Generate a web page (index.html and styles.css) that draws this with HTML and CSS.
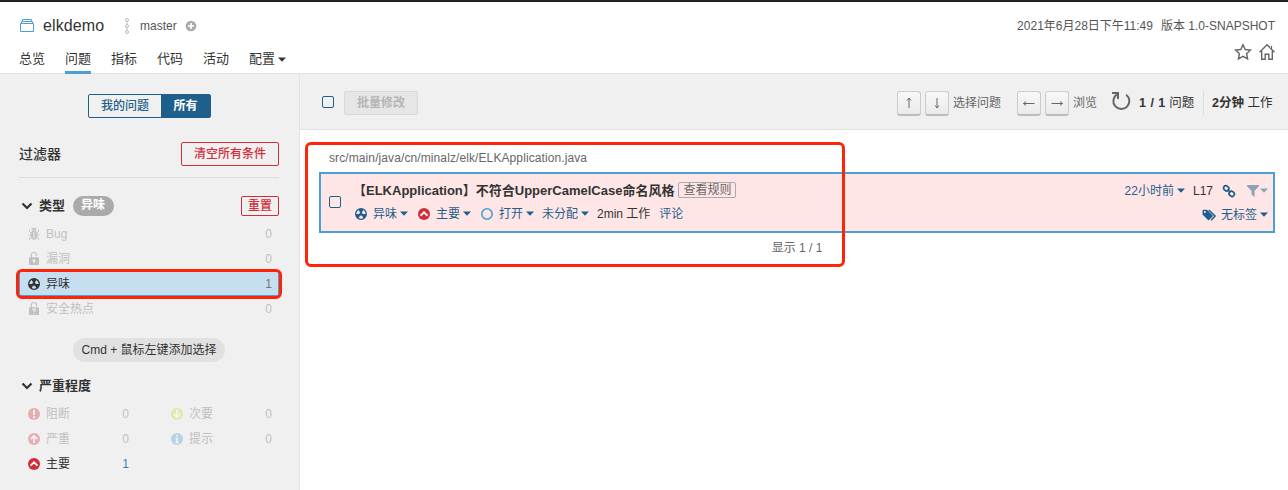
FILE: index.html
```html
<!DOCTYPE html>
<html lang="zh-CN">
<head>
<meta charset="utf-8">
<title>elkdemo</title>
<link rel="stylesheet" href="styles.css">
</head>
<body>
<svg class="defs" aria-hidden="true">
  <symbol id="smell" viewBox="0 0 16 16"><path fill="currentColor" fill-rule="evenodd" d="M8 2a6 6 0 1 0 0 12A6 6 0 0 0 8 2zM7.2 9.4L5.7 12.1a4.8 4.8 0 0 0 4.6 0L8.8 9.4a1.6 1.6 0 0 1-1.6 0zM6.4 8H3.3a4.7 4.7 0 0 1 2.3-4L7.2 6.6A1.6 1.6 0 0 0 6.4 8zM9.6 8h3.1a4.7 4.7 0 0 0-2.3-4L8.8 6.6A1.6 1.6 0 0 1 9.6 8z"/></symbol>
  <symbol id="major" viewBox="0 0 16 16"><circle cx="8" cy="8" r="6" fill="#d02f3a"/><path d="M4.6 9.6L8 6.4l3.4 3.2" fill="none" stroke="#fff" stroke-width="1.9"/></symbol>
  <symbol id="caret" viewBox="0 0 8 5"><path fill="currentColor" d="M0 .5h8L4 4.800z"/></symbol>
  <symbol id="chev" viewBox="0 0 12 8"><path d="M1.5 1.5L6 6l4.5-4.5" fill="none" stroke="#333" stroke-width="2.200"/></symbol>
  <symbol id="lock" viewBox="0 0 16 16"><path d="M5.300 7V4.200a2.600 2.600 0 0 1 5.200-.2v1" fill="none" stroke="currentColor" stroke-width="1.2"/><rect x="3" y="6.300" width="10" height="7.700" rx="1" fill="currentColor"/></symbol>
</svg>
<header class="header">
  <div class="header-top">
    <svg class="project-icon" width="16" height="16" viewBox="0 0 16 16" fill="none" stroke="#4b9fd5"><path d="M1.5 5.5h13v8h-13zM2.5 5V3.5h11V5M3.5 3V1.5h9V3"/></svg>
    <span class="project">elkdemo</span>
    <svg class="branch-icon" width="8" height="16" viewBox="0 0 8 16" fill="none" stroke="#bbb"><circle cx="4" cy="2" r="1.5"/><circle cx="4" cy="8" r="1.5"/><circle cx="4" cy="14" r="1.5"/><path d="M4 3.5v3M4 9.5v3"/></svg>
    <span class="branch">master</span>
    <svg width="12" height="12" viewBox="0 0 12 12"><circle cx="6" cy="6" r="5.3" fill="#aaa"/><path d="M6 3v6M3 6h6" stroke="#fff" stroke-width="1.7"/></svg>
    <span class="meta">2021年6月28日下午11:49</span><span class="version">版本 1.0-SNAPSHOT</span>
  </div>
  <div class="header-nav">
    <nav class="nav">
      <a class="nav-item">总览</a><a class="nav-item active">问题</a><a class="nav-item">指标</a><a class="nav-item">代码</a><a class="nav-item">活动</a><a class="nav-item">配置<svg class="caret"><use href="#caret"/></svg></a>
    </nav>
    <div class="header-actions">
      <svg width="18" height="18" viewBox="0 0 18 18" fill="none" stroke="#666" stroke-width="1.4"><path d="M9 1.7l2.2 4.8 5.2.6-3.8 3.6 1 5.2L9 13.3l-4.6 2.6 1-5.2L1.600 7.1l5.200-.6z"/></svg>
      <svg width="18" height="18" viewBox="0 0 18 18" fill="none" stroke="#666" stroke-width="1.4"><path d="M1.500 9.200L9 1.800l7.500 7.400M3.700 8v8.300h3.500v-5h3.600v5h3.500V8M13.400 5.500V3"/></svg>
    </div>
  </div>
</header>
<div class="layout">
  <aside class="sidebar">
    <div class="toggle"><span class="toggle-item">我的问题</span><span class="toggle-item on">所有</span></div>
    <div class="filters-head"><span class="filters-title">过滤器</span><button class="danger clear">清空所有条件</button></div>
    <section class="facet">
      <div class="facet-head"><svg class="chev"><use href="#chev"/></svg><b>类型</b><span class="badge">异味</span><button class="danger reset">重置</button></div>
      <div class="row muted">
        <svg class="ico" viewBox="0 0 16 16"><ellipse cx="8" cy="9" rx="3.300" ry="4.700" fill="#c4c4c4"/><path d="M5.800 4.200a2.200 2.200 0 0 1 4.400 0z" fill="#c4c4c4"/><path d="M8 6v6.500" stroke="#f0f0f0"/><path d="M5 7L3.500 5.500V3.500M11 7l1.500-1.500v-2M5 9H2.500M11 9h2.500M5 11l-1.500 1.300V14M11 11l1.500 1.300V14M6.500 3L5.700 1.600M9.500 3l.8-1.400" fill="none" stroke="#c4c4c4"/></svg>
        <span>Bug</span><i>0</i></div>
      <div class="row muted"><span class="ico locked"><svg class="ico"><use href="#lock"/></svg><svg class="ico over" viewBox="0 0 16 16"><circle cx="8" cy="9.700" r="1.400" fill="#f0f0f0"/><path d="M8 10v2.200" stroke="#f0f0f0"/></svg></span><span>漏洞</span><i>0</i></div>
      <div class="row selected"><svg class="ico"><use href="#smell"/></svg><span>异味</span><i>1</i><div class="mark mark-row"></div></div>
      <div class="row muted"><span class="ico locked"><svg class="ico"><use href="#lock"/></svg><svg class="ico over" viewBox="0 0 16 16"><path d="M6.500 9.200c0-1.900 3-1.700 3-.2 0 1-1.500 1-1.500 2.100M8 12v1.200" fill="none" stroke="#f0f0f0" stroke-width="1.200"/></svg></span><span>安全热点</span><i>0</i></div>
      <div class="hint">Cmd + 鼠标左键添加选择</div>
    </section>
    <section class="facet severity">
      <div class="facet-head"><svg class="chev"><use href="#chev"/></svg><b>严重程度</b></div>
      <div class="cols">
        <div class="row muted"><svg class="ico faded" viewBox="0 0 16 16"><circle cx="8" cy="8" r="6" fill="#d4333f"/><path d="M8 4v5M8 10.300v1.900" stroke="#fff" stroke-width="1.900"/></svg><span>阻断</span><i>0</i></div>
        <div class="row muted"><svg class="ico faded" viewBox="0 0 16 16"><circle cx="8" cy="8" r="6" fill="#c4e02c"/><path d="M8 4v7M4.800 8L8 11.200 11.200 8" fill="none" stroke="#fff" stroke-width="1.700"/></svg><span>次要</span><i>0</i></div>
        <div class="row muted"><svg class="ico faded" viewBox="0 0 16 16"><circle cx="8" cy="8" r="6" fill="#d4333f"/><path d="M8 12V5M4.800 8L8 4.800 11.200 8" fill="none" stroke="#fff" stroke-width="1.700"/></svg><span>严重</span><i>0</i></div>
        <div class="row muted"><svg class="ico faded" viewBox="0 0 16 16"><circle cx="8" cy="8" r="6" fill="#4b9fd5"/><path d="M8 4v1.800M6.500 7.500H8v4M6.300 11.500h3.500" fill="none" stroke="#fff" stroke-width="1.600"/></svg><span>提示</span><i>0</i></div>
        <div class="row"><svg class="ico"><use href="#major"/></svg><span>主要</span><i class="link">1</i></div>
      </div>
    </section>
  </aside>
  <main class="main">
    <div class="toolbar">
      <span class="check"></span><button class="bulk" disabled>批量修改</button>
      <div class="tools">
        <kbd class="key"><svg width="16" height="16" viewBox="0 0 16 16"><path d="M8 13V3M6 5.500L8 3l2 2.500"/></svg></kbd><kbd class="key"><svg width="16" height="16" viewBox="0 0 16 16"><path d="M8 3v10M6 10.500L8 13l2-2.500"/></svg></kbd><span class="tool-label pick">选择问题</span>
        <kbd class="key"><svg width="16" height="16" viewBox="0 0 16 16"><path d="M13.500 8.500h-11M5 6.500l-2.500 2 2.500 2"/></svg></kbd><kbd class="key"><svg width="16" height="16" viewBox="0 0 16 16"><path d="M2.500 8.500h11M11 6.500l2.500 2-2.500 2"/></svg></kbd><span class="tool-label browse">浏览</span>
        <svg class="reload" width="20" height="20" viewBox="0 0 20 20" fill="none" stroke="#666" stroke-width="2"><path d="M15.200 3.700A8 8 0 1 1 5.900 3.400M1 2h6v6" /></svg>
        <span class="count"><b>1 / 1</b> 问题</span><span class="effort"><b>2分钟</b> 工作</span>
      </div>
    </div>
    <div class="list">
      <div class="path">src/main/java/cn/minalz/elk/ELKApplication.java</div>
      <article class="issue">
        <span class="check"></span>
        <div class="issue-body">
          <div class="issue-title"><b>【ELKApplication】不符合UpperCamelCase命名风格</b><span class="rule">查看规则</span></div>
          <div class="issue-meta">
            <span class="act w-smell"><svg class="ico"><use href="#smell"/></svg>异味<svg class="caret"><use href="#caret"/></svg></span>
            <span class="act w-major"><svg class="ico"><use href="#major"/></svg>主要<svg class="caret"><use href="#caret"/></svg></span>
            <span class="act w-open"><svg class="ico" viewBox="0 0 16 16"><circle cx="8" cy="8" r="5.200" fill="none" stroke="#4b9fd5" stroke-width="1.600"/></svg>打开<svg class="caret"><use href="#caret"/></svg></span>
            <span class="act w-assign">未分配<svg class="caret"><use href="#caret"/></svg></span>
            <span class="work">2min 工作</span><span class="act">评论</span>
          </div>
        </div>
        <div class="issue-side">
          <div class="side-row"><span class="act">22小时前<svg class="caret"><use href="#caret"/></svg></span><span class="line">L17</span>
            <svg class="chain" width="14" height="14" viewBox="0 0 14 14" fill="none" stroke="#1f5f8b" stroke-width="1.700"><rect x="1.500" y="2" width="5.400" height="4.600" rx="2.200" transform="rotate(40 4.200 4.300)"/><rect x="7" y="7.500" width="5.400" height="4.600" rx="2.200" transform="rotate(40 9.700 9.800)"/><path d="M5.500 5.500l3 3"/></svg>
            <span class="act filter"><svg width="12" height="12" viewBox="0 0 12 12"><path fill="currentColor" d="M0 0h12v1.200L7.600 5.700V12L4.500 9.600V5.700L0 1.200z"/></svg><svg class="caret"><use href="#caret"/></svg></span></div>
          <div class="side-row tags"><svg width="15" height="12" viewBox="0 0 15 12"><path fill="#1f5f8b" fill-rule="evenodd" d="M.5 1.500v4L6.500 11.500 11 7 5 .7H1.300zM2.800 2a1 1 0 1 1 0 2 1 1 0 0 1 0-2z"/><path d="M6.800 1l6.300 6.100-4 4.200" fill="none" stroke="#1f5f8b" stroke-width="1.500"/></svg><span class="act">无标签<svg class="caret"><use href="#caret"/></svg></span></div>
        </div>
      </article>
      <div class="shown">显示 1 / 1</div>
      <div class="mark mark-issue"></div>
    </div>
  </main>
</div>
</body>
</html>
```
FILE: styles.css
```css
* { box-sizing: border-box; }
body {
  margin: 0;
  width: 1288px;
  height: 490px;
  overflow: hidden;
  background: #fff;
  color: #333;
  font: 12px/16px "Liberation Sans", "Noto Sans CJK SC", sans-serif;
}
svg { display: block; flex: none; }
button { font: inherit; padding: 0; }
i { font-style: normal; }
.defs { position: absolute; width: 0; height: 0; }
.ico { width: 16px; height: 16px; flex: none; }
.caret { width: 8px; height: 5px; margin-left: 3px; }

.header {
  height: 74px;
  border-top: 2px solid #222;
  border-bottom: 1px solid #e1e1e1;
  padding: 12px 13px 0 19px;
}
.header-top { display: flex; align-items: center; height: 24px; }
.project { font-size: 16px; letter-spacing: .1px; margin-left: 8px; width: 61px; }
.branch-icon { margin-left: 19px; }
.branch { margin: 0 8px 0 9px; color: #555; width: 37px; }
.meta { margin-left: auto; color: #555; }
.version { margin-left: 8px; color: #555; }
.header-nav { display: flex; justify-content: space-between; }
.nav { display: flex; gap: 20px; font-size: 13px; }
.nav-item { display: flex; align-items: center; height: 36px; padding-top: 9px; border-bottom: 3px solid transparent; }
.nav-item.active { border-color: #4b9fd5; }
.header-actions { display: flex; gap: 6px; padding-top: 5px; margin-right: -1px; }

.layout { display: flex; height: 416px; }
.sidebar { width: 300px; background: #f0f0f0; border-right: 1px solid #e1e1e1; padding: 20px 20px 0 19px; }
.toggle { display: flex; width: 123px; height: 24px; margin-left: 69px; border: 1px solid #1f5f8b; border-radius: 2px; font-weight: 500; color: #1f5f8b; }
.toggle-item { width: 72px; text-align: center; line-height: 22px; }
.toggle-item.on { width: 49px; background: #1f5f8b; color: #fff; font-weight: bold; }
.filters-head { display: flex; align-items: center; justify-content: space-between; height: 60px; padding-top: 12px; border-bottom: 1px solid #ddd; }
.filters-title { font-size: 14px; font-weight: 500; }
.danger { border: 1px solid #d02f3a; border-radius: 2px; background: transparent; color: #d02f3a; font-weight: 500; }
.clear { width: 98px; height: 24px; }
.reset { width: 38px; height: 20px; line-height: 16px; margin-left: auto; font-size: 12px; }
.facet { padding-top: 18px; }
.facet-head { display: flex; align-items: center; height: 20px; padding-left: 2px; font-size: 13px; }
.facet-head b { font-weight: bold; }
.chev { width: 12px; height: 8px; margin-right: 6px; }
.badge { margin-left: 8px; padding: 0 8px; height: 20px; line-height: 18px; border-radius: 10px; background: #aaa; color: #fff; font-size: 12px; width: 41px; font-weight: bold; }
.row { display: flex; align-items: center; height: 25px; padding: 0 7px; }
.facet-head + .row { margin-top: 5px; }
.row span:not(.ico) { margin-left: 4px; }
.row i { margin-left: auto; color: #777; }
.row .link { color: #3b81b5; }
.row.muted, .row.muted i { color: #c0c0c0; }
.locked { position: relative; }
.over { position: absolute; top: 0; left: 0; }
.faded { opacity: .35; }
.row.selected { position: relative; background: #c6dff0; border: 1px solid #4b9fd5; padding: 0 6px; }
.mark { position: absolute; border: 3px solid #ff2408; border-radius: 6px; pointer-events: none; }
.mark-row { left: -4px; top: -3px; width: 266px; height: 30px; }
.hint { width: 152px; height: 24px; margin: 17px 0 0 54px; border-radius: 12px; background: #e1e1e1; text-align: center; line-height: 24px; }
.severity { padding-top: 14px; }
.cols { display: grid; grid-template-columns: 117px 117px; column-gap: 26px; margin-top: 5px; }

.main { flex: 1; }
.toolbar { display: flex; align-items: center; height: 56px; padding: 2px 13px 0 22px; background: #f0f0f0; border-bottom: 1px solid #e1e1e1; }
.check { width: 12px; height: 12px; border: 1px solid #1f5f8b; border-radius: 2px; flex: none; }
.toolbar .check { margin-top: -2px; }
.bulk { width: 74px; height: 24px; margin-left: 10px; border: 1px solid #d8d8d8; border-radius: 2px; background: #e6e6e6; color: #b5b5b5; font-weight: bold; }
.tools { display: flex; align-items: center; margin-left: auto; color: #666; }
.key { display: flex; align-items: center; justify-content: center; width: 24px; height: 25px; margin: 2px 4px 0 0; border: 1px solid #ccc; border-bottom: 2px solid #bbb; border-radius: 3px; background: linear-gradient(#f8f8f8, #eaeaea); }
.key svg { fill: none; stroke: #666; }
.tool-label.pick { margin-right: 16px; }
.tool-label.browse { margin-right: 14px; }
.reload { margin-top: -3px; }
.count { margin-left: 8px; width: 56px; color: #333; font-size: 12.500px; white-space: nowrap; }
.count b { letter-spacing: .5px; }
.effort { margin-left: 8px; padding-left: 8px; width: 72px; border-left: 1px solid #ddd; line-height: 24px; color: #333; font-size: 12.500px; white-space: nowrap; }

.list { position: relative; padding: 20px 13px 0 19px; }
.path { padding-left: 10px; height: 22px; color: #666; letter-spacing: .1px; }
.issue { display: flex; align-items: center; height: 61px; padding: 0 5px 0 8px; border: 2px solid #4b9fd5; background: #ffe6e6; }
.issue .check { margin-top: -2px; }
.issue-body { margin: -1px 0 0 12px; }
.issue-title { display: flex; align-items: center; height: 20px; font-size: 13px; margin-bottom: 3px; padding-top: 1px; }
.issue-title b { font-weight: bold; }
.rule { margin: -2px 0 0 4px; padding: 0 4px; width: 58px; border: 1px solid #aaa; border-radius: 2px; font-size: 12px; line-height: 14px; color: #666; }
.issue-meta { display: flex; align-items: center; height: 20px; }
.act { display: flex; align-items: center; color: #1f5f8b; white-space: nowrap; }
.act .ico { margin-right: 4px; }
.w-smell, .w-major, .w-open { width: 63px; }
.w-assign { width: 55px; }
.work { margin-right: 9px; }
.issue-side { margin-left: auto; }
.side-row { display: flex; align-items: center; justify-content: flex-end; height: 24px; }
.line { margin: 0 9px 0 8px; }
.chain { margin-right: 11px; }
.filter { opacity: .5; }
.filter .caret { margin-left: 1px; }
.tags .act { margin-left: 4px; }
.shown { padding-top: 7px; text-align: center; color: #666; }
.mark-issue { left: 5px; top: 12px; width: 540px; height: 125px; }
```
